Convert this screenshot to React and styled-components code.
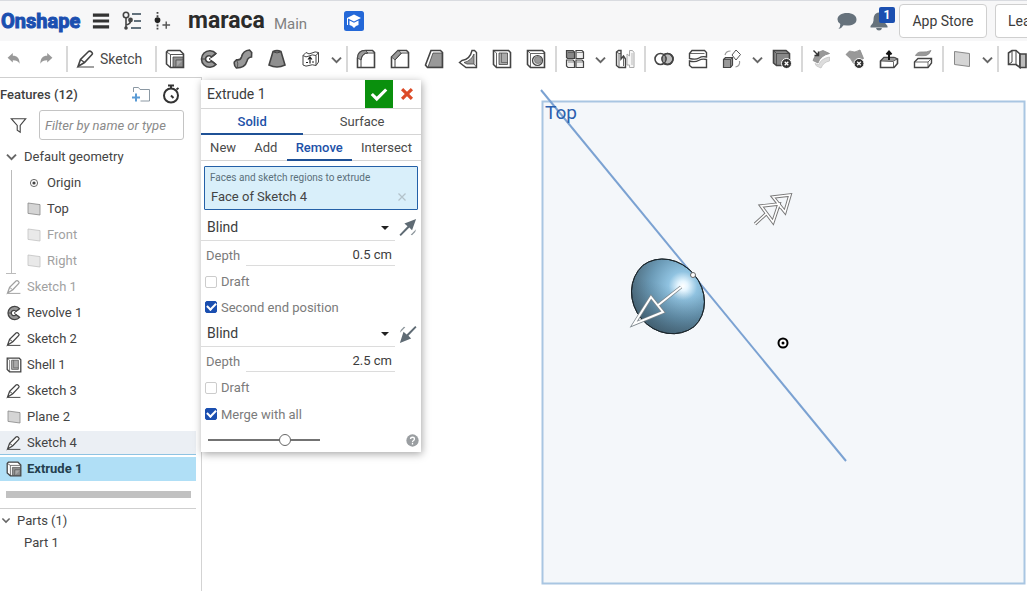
import { useState } from 'react';
import styled, { createGlobalStyle } from 'styled-components';

const GlobalStyle = createGlobalStyle`
    * {
        box-sizing: border-box;
    }
    body {
        margin: 0;
        background: #fff;
        color: #444;
        font-family: Roboto, "Liberation Sans", sans-serif;
        font-size: 13px;
        overflow: hidden;
    }
    button, input, select {
        font: inherit;
        color: inherit;
    }
    ul {
        display: flex;
        flex-direction: column;
        list-style: none;
        margin: 0;
        padding: 0;
    }
`;

const Page = styled.div`
    display: flex;
    flex-direction: column;
    min-height: 100vh;
`;

/* ---------- header ---------- */

const Header = styled.header`
    display: flex;
    align-items: center;
    height: 41px;
    background: #f7f7f8;
    border-top: 1px solid #d9dbe0;
    overflow: hidden;
`;

const Logo = styled.a`
    width: 84px;
    padding-left: 1px;
    color: #1b4fb0;
    font-size: 20px;
    font-weight: 700;
    line-height: 36px;
    text-decoration: none;
    -webkit-text-stroke: 1px #1b4fb0;
`;

const IconButton = styled.button`
    display: flex;
    flex: none;
    align-items: center;
    justify-content: center;
    width: ${(props) => props.$width || 34}px;
    height: 34px;
    padding: 0;
    border: 0;
    background: none;
`;

const DocName = styled.h1`
    margin: 0 0 0 10px;
    color: #2b2b2b;
    font-size: 23px;
    font-weight: 700;
    line-height: 44px;
`;

const Workspace = styled.span`
    margin: 6px 30px 0 9px;
    color: #808080;
    font-size: 15px;
`;

const HeaderRight = styled.div`
    display: flex;
    align-items: center;
    margin-left: auto;
`;

const Bell = styled.div`
    position: relative;
    margin-right: 3px;
`;

const Badge = styled.span`
    position: absolute;
    top: 3px;
    right: 1px;
    width: 16px;
    height: 16px;
    border-radius: 2px;
    background: #1b4fb0;
    color: #fff;
    font-size: 12px;
    font-weight: 700;
    line-height: 16px;
    text-align: center;
`;

const StoreButton = styled.button`
    width: 88px;
    height: 34px;
    margin-right: 8px;
    padding: 0;
    border: 1px solid #cfcfcf;
    border-radius: 4px;
    background: #fff;
    color: #3c3c3c;
    font-size: 14px;
`;

const LearnButton = styled(StoreButton)`
    width: 32px;
    margin-right: 0;
    padding-left: 12px;
    border-right: 0;
    border-radius: 4px 0 0 4px;
    overflow: hidden;
    text-align: left;
    white-space: nowrap;
`;

/* ---------- toolbar ---------- */

const Toolbar = styled.div`
    display: flex;
    align-items: center;
    height: 36px;
    overflow: hidden;
`;

const Divider = styled.span`
    flex: none;
    width: 2px;
    height: 26px;
    margin: 0 1px 0 2px;
    background: #d8d8d8;
`;

const SketchButton = styled.button`
    display: flex;
    flex: none;
    align-items: center;
    gap: 4px;
    width: 84px;
    padding: 0 0 0 7px;
    border: 0;
    background: none;
    color: #4a4a4a;
    font-size: 14px;
`;

/* ---------- feature list ---------- */

const Main = styled.main`
    display: grid;
    flex: 1;
    grid-template-columns: 202px 1fr;
`;

const Sidebar = styled.aside`
    border-top: 1px solid #cfcfcf;
    border-right: 1px solid #d3d3d3;
`;

const SideTitle = styled.div`
    display: flex;
    align-items: center;
    height: 32px;
    padding-right: 14px;
    h2 {
        flex: 1;
        margin: 0;
        color: #3f3f3f;
        font-size: 13px;
        font-weight: 500;
    }
`;

const FilterRow = styled.label`
    display: flex;
    align-items: center;
    gap: 12px;
    padding: 0 17px 4px 10px;
`;

const FilterInput = styled.input`
    flex: 1;
    min-width: 0;
    height: 30px;
    padding: 0 5px;
    border: 1px solid #c4c4c4;
    border-radius: 3px;
    font-style: italic;
    &::placeholder {
        color: #8a8a8a;
    }
`;

const FeatureRow = styled.li`
    display: flex;
    align-items: center;
    gap: 5px;
    height: 24px;
    margin: 1px 5px 1px 0;
    padding-left: ${(props) => props.$indent || 6}px;
    opacity: ${(props) => (props.$hidden ? 0.5 : 1)};
    background: ${(props) => (props.$selected ? '#b0dff6' : props.$hovered ? '#ebeff4' : 'none')};
    border-bottom: 1px solid ${(props) => (props.$hovered ? '#8ec3e2' : 'transparent')};
    font-weight: ${(props) => (props.$selected ? 700 : 400)};
    color: ${(props) => (props.$selected ? '#24404f' : '#444')};
`;

const Nested = styled.ul`
    position: relative;
    margin-left: 11px;
    border-left: 1px solid #bbb;
    &::after {
        content: '';
        position: absolute;
        left: -6px;
        bottom: 0;
        width: 10px;
        height: 1px;
        background: #bbb;
    }
`;

const RollbackBar = styled.div`
    height: 7px;
    margin: 9px 10px 10px 6px;
    background: #c1c1c1;
`;

const Parts = styled.section`
    margin-right: 5px;
    border-top: 1px solid #cfcfcf;
`;

const PartsTitle = styled.h2`
    display: flex;
    align-items: center;
    gap: 5px;
    height: 22px;
    margin: 0;
    font-size: 13px;
    font-weight: 400;
`;

const PartRow = styled.li`
    padding-left: 24px;
    line-height: 24px;
`;

/* ---------- viewport and dialog ---------- */

const Viewport = styled.section`
    position: relative;
`;

const Scene = styled.svg`
    position: absolute;
    inset: 0;
    width: 100%;
    height: 100%;
`;

const Dialog = styled.form`
    position: absolute;
    top: 3px;
    left: -1px;
    width: 220px;
    background: #fff;
    box-shadow: 1px 2px 8px rgba(0, 0, 0, 0.35);
`;

const DialogTitle = styled.div`
    display: flex;
    align-items: center;
    height: 29px;
    padding-left: 6px;
    border-bottom: 1px solid #d5d5d5;
    h2 {
        flex: 1;
        margin: 0;
        color: #3c3c3c;
        font-size: 14px;
        font-weight: 400;
    }
`;

const DialogButton = styled.button`
    display: grid;
    place-items: center;
    width: 28px;
    height: 28px;
    padding: 0;
    border: 0;
    background: ${(props) => (props.$ok ? '#0a900d' : 'none')};
`;

const Tabs = styled.div`
    display: flex;
    height: 26px;
    border-bottom: 1px solid #d5d5d5;
`;

const Tab = styled.button`
    flex: 1 1 auto;
    height: 26px;
    padding: 1px 8px 0;
    border: 0;
    border-bottom: 2px solid ${(props) => (props.$active ? '#1f5196' : 'transparent')};
    background: none;
    color: ${(props) => (props.$active ? '#1d51a8' : '#4a4a4a')};
    font-weight: ${(props) => (props.$active ? 500 : 400)};
`;

const Selection = styled.div`
    margin: 5px 3px 4px;
    height: 44px;
    padding: 4px 8px 0 5px;
    border: 1px solid #2460a7;
    border-radius: 1px;
    background: #d9effa;
`;

const SelectionLabel = styled.div`
    color: #5b6f7b;
    font-size: 10px;
    line-height: 14px;
`;

const SelectionItem = styled.div`
    display: flex;
    align-items: center;
    justify-content: space-between;
    padding-left: 1px;
    line-height: 24px;
    button {
        display: flex;
        padding: 0 2px;
        border: 0;
        background: none;
    }
`;

const TypeRow = styled.div`
    display: flex;
    align-items: center;
    height: 27px;
`;

const SelectBox = styled.div`
    position: relative;
    flex: 1;
    border-bottom: 1px solid #dcdcdc;
    svg {
        position: absolute;
        top: 12px;
        right: 6px;
        pointer-events: none;
    }
`;

const TypeSelect = styled.select`
    display: block;
    width: 100%;
    height: 26px;
    padding: 0 6px;
    border: 0;
    appearance: none;
    background: none;
    color: #3c3c3c;
    font-size: 14px;
`;

const DepthRow = styled.label`
    display: flex;
    align-items: center;
    height: 28px;
    padding: 0 26px 0 5px;
    color: #7b7b7b;
`;

const DepthInput = styled.input`
    flex: 1;
    min-width: 0;
    height: 22px;
    margin-left: 6px;
    padding: 0 3px 0 0;
    border: 0;
    border-bottom: 1px solid #dcdcdc;
    background: none;
    color: #3c3c3c;
    text-align: right;
`;

const CheckRow = styled.label`
    display: flex;
    align-items: center;
    gap: 4px;
    height: ${(props) => props.$height || 26}px;
    padding-left: 4px;
    color: #7b7b7b;
`;

const CheckBox = styled.input`
    display: grid;
    place-items: center;
    width: 12px;
    height: 12px;
    margin: 0;
    border: 1px solid #ccc;
    border-radius: 2px;
    appearance: none;
    &:checked {
        border-color: #1b4fb0;
        background: #1b4fb0;
    }
    &:checked::after {
        content: '';
        width: 7px;
        height: 4px;
        border: solid #fff;
        border-width: 0 0 2px 2px;
        transform: rotate(-45deg) translate(1px, -1px);
    }
`;

const DialogFooter = styled.div`
    display: flex;
    align-items: center;
    justify-content: space-between;
    height: 24px;
    padding: 0 2px 0 7px;
`;

const Slider = styled.input`
    width: 112px;
    height: 14px;
    margin: 0;
    appearance: none;
    background: linear-gradient(#737373, #737373) center / 100% 2px no-repeat;
    &::-webkit-slider-thumb {
        width: 12px;
        height: 12px;
        border: 1px solid #666;
        border-radius: 50%;
        appearance: none;
        background: #fff;
    }
`;

/* ---------- icons ---------- */

const shapes = {
    undo: (
        <path d="M2 8.5 8.5 2.5V6C14 6 17 9 17 16 15 12.500 13 11.500 8.500 11.500V14.500Z" fill="#999" stroke="none" />
    ),
    redo: (
        <path d="M18 8.500 11.500 2.500V6C6 6 3 9 3 16 5 12.500 7 11.500 11.500 11.500V14.500Z" fill="#999" stroke="none" />
    ),
    pencil: (
        <>
            <path d="M2 17.5 4.5 10.5 12.5 2.5Q14 1.5 15.5 3T16 5.5L8.5 13.5Z" fill="#fff" />
            <path d="M4.5 10.5 8.5 13.5M2 18H18" fill="none" strokeWidth="1.2" />
        </>
    ),
    extrude: (
        <>
            <path d="M1.5 3 3 1.5H15L18.5 5V18.5H5.5L1.5 15Z" fill="#fff" />
            <path d="M1.5 3 5.5 5.5V18.5M5.5 5.5H18" fill="none" strokeWidth=".9" />
            <path d="M8 8H18V18H8Z" fill="#8f8f8f" strokeWidth=".8" />
            <path d="M11 18V11H18" fill="#aaa" strokeWidth=".7" />
        </>
    ),
    revolve: (
        <>
            <path d="M17 4.5A8.3 8.3 0 1 0 17 15.5L12.5 12A3.3 3.3 0 1 1 12.5 8Z" fill="#999" />
            <path d="M2.5 10H7M10 10 17 5M10 10 17 15" fill="none" strokeWidth="1" />
        </>
    ),
    sweep: (
        <>
            <path
                d="M1.300 13 3.500 10.800Q7.500 11.500 8.500 8 10 1.500 16.500 1L18.700 3.500 18.500 8Q14.800 8.500 14 12 12 19 3.500 19Q.800 17 1.300 13Z"
                fill="#999"
            />
            <path d="M3.500 10.800Q5.500 13.500 4.500 18.500" fill="none" strokeWidth=".8" />
        </>
    ),
    loft: (
        <>
            <path d="M6 2.5Q10 .8 14 2.5L18 16Q10 20 2 16Z" fill="#8f8f8f" />
            <path d="M6.500 3Q10 4.800 13.500 3" fill="none" strokeWidth="1" />
        </>
    ),
    thicken: (
        <>
            <path d="M2 6.5 5 3.5Q8 6 11 4T17.5 3.5V13L15 16.5Q11 15 8 16.5T2 16Z" fill="#fff" strokeWidth="1" />
            <path d="M2 6.5Q5 9 8 7T15 6.5V16.5M15 6.5 17.5 3.5" fill="none" strokeWidth="1" />
            <path d="M9 14.500V8.500M7 10.500 9 8 11 10.500M5 13.500H7M11 13H13" fill="none" stroke="#222" strokeWidth="1.2" />
        </>
    ),
    chevron: <path d="M4 7.500 10 13.500 16 7.500" fill="none" stroke="#666" strokeWidth="2.600" />,
    fillet: (
        <>
            <path d="M1.500 18.500V9Q2 1.500 9.500 1.500H16.500L18.500 3.500V18.500Z" fill="#fff" />
            <path d="M1.500 9Q2 1.500 9.500 1.500L12 4Q6 4 5 11Z" fill="#999" strokeWidth=".8" />
            <path d="M5 18V11Q6 4 12 4H18" fill="none" strokeWidth="1" />
        </>
    ),
    chamfer: (
        <>
            <path d="M1.500 18.500V8L8 1.500H16.500L18.500 3.500V18.500Z" fill="#fff" />
            <path d="M1.500 8 8 1.500 11.500 4 5 11Z" fill="#999" strokeWidth=".8" />
            <path d="M5 18V11L11.500 4H18" fill="none" strokeWidth="1" />
        </>
    ),
    draft: (
        <>
            <path d="M1.500 16 7 1.500H16.500L18.500 3.500V18.500H3.500Z" fill="#fff" />
            <path d="M9 4H18V18H4Z" fill="#999" strokeWidth=".8" />
        </>
    ),
    rib: (
        <>
            <path d="M1.500 13.500 4 11.500Q12 10.500 14 1.500H16.500L18.500 3.500V18.500H8Z" fill="#fff" strokeWidth="1.400" />
            <path d="M6 13.500Q13 12 16 5V15H9Z" fill="#999" strokeWidth=".8" />
            <path d="M16 15 18.500 18" fill="none" strokeWidth=".8" />
        </>
    ),
    shell: (
        <>
            <path d="M1.500 1.500H16.500L18.500 3.500V18.500H4.500L1.500 15.500Z" fill="#fff" />
            <path d="M1.500 1.500 4.500 4V18.500" fill="none" strokeWidth=".8" />
            <path d="M7 4H15.500V15.500H7Z" fill="#aaa" strokeWidth=".8" />
            <path d="M9.500 4V13.500H15.500" fill="none" strokeWidth=".6" />
        </>
    ),
    hole: (
        <>
            <path d="M1.500 1.500H16.500L18.500 3.500V18.500H4.500L1.500 15.500Z" fill="#fff" />
            <path d="M1.500 1.500 4.500 4.500V18.500M4.500 4.500H18" fill="none" strokeWidth=".8" />
            <circle cx="11.500" cy="11.500" r="5" fill="#ddd" strokeWidth="1.200" />
            <circle cx="12" cy="11" r="3.500" fill="#999" stroke="#777" strokeWidth=".8" />
        </>
    ),
    pattern: (
        <>
            <path d="M1.500 1.500H8L9.500 3V9.500H2.500L1.500 8.500Z" fill="#888" strokeWidth="1.200" />
            <path
                d="M11 1.500H17L18.500 3V9.500H11ZM1.500 11H8L9.500 12.500V18.500H3L1.500 17ZM11 11H17L18.500 12.500V18.500H11Z"
                fill="#eee"
                strokeWidth="1.200"
            />
            <path d="M3 3.500H9M12 3.500H18M3 13H9M12 13H18" fill="none" strokeWidth=".6" />
        </>
    ),
    mirror: (
        <>
            <path d="M1.500 3 3.500 1.500H6V10L8.500 7 10.500 10V18.500H4L1.500 16.500Z" fill="#fff" strokeWidth="1.400" />
            <path d="M1.500 3 4 4.500V18M4 4.500H6M8.500 7V17" fill="none" strokeWidth=".8" />
            <path d="M19 3.500 17.500 1.500H14.500V7L12 5V16H14.500V18.500H19Z" fill="#f6f6f6" stroke="#aaa" strokeWidth="1" />
            <path d="M17 4V16" fill="none" stroke="#bbb" strokeWidth="1" />
        </>
    ),
    boolean: (
        <>
            <circle cx="13.500" cy="10" r="5.500" fill="#bbb" />
            <circle cx="6.500" cy="10" r="5.500" fill="#fff" />
            <circle cx="13.500" cy="10" r="5.500" fill="none" />
            <path d="M10 5.800A5.500 5.500 0 0 1 10 14.200 5.500 5.500 0 0 1 10 5.800" fill="#999" strokeWidth="1" />
        </>
    ),
    split: (
        <>
            <path d="M1.500 4.500 4 1.500H16.500L18.500 3.500V8Q14 7 11 9T1.500 9.500Z" fill="#fff" strokeWidth="1.400" />
            <path d="M1.500 12Q7 13.500 10.500 11.500T18.500 10.500V18.500H4L1.500 16.500Z" fill="#fff" strokeWidth="1.400" />
            <path d="M1.500 4.500H16.500" fill="none" strokeWidth=".8" />
        </>
    ),
    transform: (
        <>
            <path d="M1.500 10.500 3.500 8.500H10.500V16L8.500 18.500H1.500Z" fill="#999" strokeWidth="1.200" />
            <path d="M1.500 10.500H8.500V18.500M8.500 10.500 10.500 8.500" fill="none" strokeWidth=".8" />
            <path d="M14 1 18.500 5.500 14 11 10 6Z" fill="#fff" strokeWidth=".9" />
            <path d="M3 6Q4 2 8.500 2M17.500 12Q18.500 17 13.500 18" fill="none" stroke="#999" strokeWidth="1.200" />
        </>
    ),
    deletePart: (
        <>
            <path d="M1.500 1.500H14L17.500 4.500V16.500H4.500L1.500 14Z" fill="#888" />
            <path d="M1.500 1.500 4.500 4.500V16.500M4.500 4.500H17" fill="none" strokeWidth=".8" />
            <circle cx="14.500" cy="14.500" r="5" fill="#333" stroke="#fff" strokeWidth="1" />
            <path d="M12.700 12.700 16.300 16.300M16.300 12.700 12.700 16.300" fill="none" stroke="#fff" strokeWidth="1.300" />
        </>
    ),
    modifyFillet: (
        <>
            <path d="M2 11.500Q5 3 12 1.500L18.500 4.500Q9.500 6.500 7 14Z" fill="#999" stroke="#888" strokeWidth=".8" />
            <path d="M4 14.500 7.500 16Q10 9.500 18.500 8V12Q12.500 13 10 19L5.500 17Z" fill="#ddd" stroke="#c4c4c4" strokeWidth=".8" />
            <path d="M2.500 1.500 7 6M7.500 2.500V6.500H3.500" fill="none" stroke="#333" strokeWidth="1.400" />
        </>
    ),
    deleteFace: (
        <>
            <path d="M1 5.500 4.500 2Q10 4.500 15 1L18.500 9.500Q13 10.500 8.500 14.500Q6 9 1 5.500Z" fill="#999" stroke="#888" strokeWidth=".8" />
            <circle cx="14" cy="14.500" r="5" fill="#333" stroke="#fff" strokeWidth="1" />
            <path d="M12.200 12.700 15.800 16.300M15.800 12.700 12.200 16.300" fill="none" stroke="#fff" strokeWidth="1.300" />
        </>
    ),
    moveFace: (
        <>
            <path d="M1.500 12 5 8.500H15L18.500 10V14.500L15 18.500H1.500Z" fill="#fff" />
            <path d="M2 12 5 8.500H15.500L18 10 14 12.500Z" fill="#999" strokeWidth=".8" />
            <path d="M14.500 13V18" fill="none" strokeWidth=".8" />
            <path d="M10 11V3M7.500 5.500 10 2.500 12.500 5.500" fill="none" stroke="#111" strokeWidth="2" />
        </>
    ),
    replaceFace: (
        <>
            <path d="M2.500 6.500Q4.500 2.500 9 3T18 1.500Q16 6 13 6.500T2.500 6.500Z" fill="#999" stroke="#888" strokeWidth=".8" />
            <path d="M1.500 13 5 9.500H18.500V14L15 18.500H1.500Z" fill="#fff" strokeWidth="1.400" />
            <path d="M1.500 13H15V18.500M15 13 18.500 9.500" fill="none" strokeWidth=".8" />
        </>
    ),
    plane: <path d="M2.500 2.500 17.500 4.500V17.500L2.500 15.500Z" fill="#d5d5d5" stroke="#888" strokeWidth="1" />,
    frame: (
        <>
            <path d="M1.500 4 5 1.500H9L13 5V18.500L9 15.500H1.500Z" fill="#fff" />
            <path d="M5 1.500V13M9 1.500V15.500L13 18.500M5 13 1.500 15.500" fill="none" strokeWidth="1" />
            <path d="M13 5H19V18.500H13Z" fill="#bbb" />
        </>
    ),
    origin: (
        <>
            <circle cx="10" cy="10" r="4.500" fill="none" strokeWidth="1" />
            <circle cx="10" cy="10" r="2" fill="#444" stroke="none" />
        </>
    ),
    menu: <path d="M1 3.500H19M1 10H19M1 16.500H19" fill="none" stroke="#333" strokeWidth="3.400" />,
    versions: (
        <>
            <circle cx="4" cy="4" r="2.700" fill="none" />
            <circle cx="8.500" cy="9" r="1.600" fill="#444" />
            <path d="M4 7V17M8.500 10Q8.500 13 4 14" fill="none" />
            <circle cx="4" cy="17" r="1.800" fill="#444" stroke="none" />
            <path d="M10 3H19M12 10H19M9 17H19" fill="none" stroke="#62717c" strokeWidth="2" />
        </>
    ),
    insertVersion: (
        <>
            <path d="M5 0V20" fill="none" strokeDasharray="2 1.500" strokeWidth="2" />
            <circle cx="5" cy="9" r="3.200" fill="#222" stroke="none" />
            <path d="M10.500 14.500H19M14.700 10.500V18.500" fill="none" stroke="#555" />
        </>
    ),
    learn: (
        <>
            <rect width="20" height="20" rx="2.500" fill="#2468d8" stroke="none" />
            <path d="M10 3.500 17 7 10 10.500 3 7Z" fill="#fff" stroke="none" />
            <path d="M5.500 9.500 10 11.700 14.500 9.500V14L12 15 10 17 8 15 5.500 14Z" fill="#fff" stroke="none" />
            <path d="M3.500 7V14" fill="none" stroke="#fff" strokeWidth="1" />
        </>
    ),
    chat: <path d="M10 2C15.500 2 19.500 4.500 19.500 8.500S15.500 14.500 10 14.500L6.500 14.200Q4.500 17.500 1.500 18 3.500 15.500 3.300 13 .500 11.300 .500 8.500C.500 4.500 4.500 2 10 2Z" fill="#66727c" stroke="none" />,
    bell: (
        <>
            <path d="M10 1.500C15 2 15.500 6 15.500 9.500Q15.500 12.500 18.500 15V16.500H1.500V15Q4.500 12.500 4.500 9.500C4.500 6 5 2 10 1.500Z" fill="#66727c" stroke="none" />
            <path d="M7 17H13Q12.500 19.500 10 19.500T7 17Z" fill="#66727c" stroke="none" />
        </>
    ),
    folderAdd: (
        <>
            <path d="M2.500 8V3.500H7.500L9 5.500H18.500V17H9.500" fill="none" stroke="#8b98a3" strokeWidth="1" />
            <path d="M5 9.500V17.500M1 13.500H9" fill="none" stroke="#5b9bd5" strokeWidth="2" />
        </>
    ),
    stopwatch: (
        <>
            <circle cx="10" cy="11.500" r="7" fill="none" stroke="#333" strokeWidth="2" />
            <path d="M7 1.500H13M10 1.500V5M15.500 5.500 17.500 4M10 11.500 12.500 14" fill="none" stroke="#333" strokeWidth="2" />
        </>
    ),
    funnel: <path d="M1.500 2H18.500L12 10V18L8.500 15.500V10Z" fill="none" strokeWidth="1.300" />,
    check: <path d="M2 10 7.500 15.500 18 5" fill="none" stroke="#fff" strokeWidth="3.500" />,
    cross: <path d="M3 3 17 17M17 3 3 17" fill="none" stroke="#dc4b28" strokeWidth="4.500" />,
    remove: <path d="M3 3 17 17M17 3 3 17" fill="none" stroke="#b3c2ca" strokeWidth="2.500" />,
    flip: (
        <>
            <path d="M19 0 14.500 12.500 11.500 9.500 2 19 .500 17.500 9.500 8 6 5Z" fill="#5f6b74" stroke="none" />
            <path d="M13 17.500 19 11.500 18 14.500 14.500 18Z" fill="#8c959b" stroke="none" />
        </>
    ),
    flipBack: (
        <>
            <path d="M1 20 5 7.500 8.500 10.500 18 1 19.500 2.500 10.500 12 13.500 15Z" fill="#5f6b74" stroke="none" />
            <path d="M1 8.500 7 2.500 5.500 2 2 5.500Z" fill="#8c959b" stroke="none" />
        </>
    ),
    help: (
        <>
            <circle cx="10" cy="10" r="9.500" fill="#9a9ea1" stroke="none" />
            <path d="M7 7.800Q7 5 10 5T13 7.800Q13 9.200 11.500 10T10 12.500M10 14V16" fill="none" stroke="#fff" strokeWidth="2" />
        </>
    ),
};

function Icon({ name, size = 20 }) {
    return (
        <svg width={size} height={size} viewBox="0 0 20 20" stroke="#444" strokeWidth="1.6" aria-hidden="true">
            {shapes[name]}
        </svg>
    );
}

// each group is followed by a divider
const toolGroups = [
    ['extrude', 'revolve', 'sweep', 'loft', 'thicken', 'chevron'],
    ['fillet', 'chamfer', 'draft', 'rib', 'shell', 'hole'],
    ['pattern', 'chevron', 'mirror'],
    ['boolean', 'split', 'transform', 'chevron', 'deletePart'],
    ['modifyFillet', 'deleteFace', 'moveFace', 'replaceFace'],
    ['plane', 'chevron'],
];

const geometry = [
    { name: 'Origin', icon: 'origin' },
    { name: 'Top', icon: 'plane' },
    { name: 'Front', icon: 'plane', hidden: true },
    { name: 'Right', icon: 'plane', hidden: true },
];

const features = [
    { name: 'Sketch 1', icon: 'pencil', hidden: true },
    { name: 'Revolve 1', icon: 'revolve' },
    { name: 'Sketch 2', icon: 'pencil' },
    { name: 'Shell 1', icon: 'shell' },
    { name: 'Sketch 3', icon: 'pencil' },
    { name: 'Plane 2', icon: 'plane' },
    { name: 'Sketch 4', icon: 'pencil', hovered: true },
    { name: 'Extrude 1', icon: 'extrude', selected: true },
];

function TopBar() {
    return (
        <Header>
            <Logo href="#">Onshape</Logo>
            <IconButton aria-label="Menu"><Icon name="menu" size={18} /></IconButton>
            <IconButton $width={28} aria-label="Versions"><Icon name="versions" /></IconButton>
            <IconButton $width={32} aria-label="Create version"><Icon name="insertVersion" size={18} /></IconButton>
            <DocName>maraca</DocName>
            <Workspace>Main</Workspace>
            <IconButton aria-label="Education"><Icon name="learn" /></IconButton>
            <HeaderRight>
                <IconButton $width={30} aria-label="Comments"><Icon name="chat" /></IconButton>
                <Bell>
                    <IconButton aria-label="Notifications"><Icon name="bell" /></IconButton>
                    <Badge>1</Badge>
                </Bell>
                <StoreButton>App Store</StoreButton>
                <LearnButton>Learn</LearnButton>
            </HeaderRight>
        </Header>
    );
}

function Tools() {
    return (
        <Toolbar>
            <IconButton $width={28} aria-label="Undo"><Icon name="undo" size={16} /></IconButton>
            <IconButton $width={36} aria-label="Redo"><Icon name="redo" size={16} /></IconButton>
            <Divider />
            <SketchButton><Icon name="pencil" /> Sketch</SketchButton>
            {toolGroups.map((group, i) => [
                <Divider key={'divider' + i} />,
                ...group.map((name) => (
                    <IconButton key={name} aria-label={name} $width={name === 'chevron' ? 16 : 34}>
                        <Icon name={name} size={name === 'chevron' ? 15 : 20} />
                    </IconButton>
                )),
            ])}
            <Divider />
            <IconButton aria-label="frame"><Icon name="frame" /></IconButton>
        </Toolbar>
    );
}

function FeatureList() {
    return (
        <Sidebar>
            <SideTitle>
                <h2>Features (12)</h2>
                <IconButton $width={28} aria-label="Add folder"><Icon name="folderAdd" /></IconButton>
                <IconButton $width={32} aria-label="Rebuild times"><Icon name="stopwatch" /></IconButton>
            </SideTitle>
            <FilterRow>
                <Icon name="funnel" size={17} />
                <FilterInput placeholder="Filter by name or type" aria-label="Filter" />
            </FilterRow>
            <ul>
                <FeatureRow $indent={4}><Icon name="chevron" size={15} />Default geometry</FeatureRow>
            </ul>
            <Nested>
                {geometry.map((item) => (
                    <FeatureRow key={item.name} $indent={14} $hidden={item.hidden}>
                        <Icon name={item.icon} size={16} />
                        {item.name}
                    </FeatureRow>
                ))}
            </Nested>
            <ul>
                {features.map((item) => (
                    <FeatureRow key={item.name} $hidden={item.hidden} $hovered={item.hovered} $selected={item.selected}>
                        <Icon name={item.icon} size={16} />
                        {item.name}
                    </FeatureRow>
                ))}
            </ul>
            <RollbackBar />
            <Parts>
                <PartsTitle><Icon name="chevron" size={12} />Parts (1)</PartsTitle>
                <ul>
                    <PartRow>Part 1</PartRow>
                </ul>
            </Parts>
        </Sidebar>
    );
}

function EndCondition({ id, depth, flip }) {
    return (
        <>
            <TypeRow>
                <SelectBox>
                    <TypeSelect aria-label={id + ' end type'} defaultValue="Blind">
                        <option>Blind</option>
                    </TypeSelect>
                    <svg width="8" height="5"><path d="M0 0H8L4 4Z" fill="#222" /></svg>
                </SelectBox>
                <IconButton type="button" $width={26} aria-label="Flip direction"><Icon name={flip} size={18} /></IconButton>
            </TypeRow>
            <DepthRow>
                Depth
                <DepthInput defaultValue={depth} />
            </DepthRow>
            <CheckRow $height={25}>
                <CheckBox type="checkbox" />
                Draft
            </CheckRow>
        </>
    );
}

function ExtrudeDialog() {
    const [body, setBody] = useState('Solid');
    const [mode, setMode] = useState('Remove');

    return (
        <Dialog>
            <DialogTitle>
                <h2>Extrude 1</h2>
                <DialogButton type="button" $ok aria-label="Accept"><Icon name="check" size={18} /></DialogButton>
                <DialogButton type="button" aria-label="Cancel"><Icon name="cross" size={14} /></DialogButton>
            </DialogTitle>
            <Tabs>
                {['Solid', 'Surface'].map((name) => (
                    <Tab key={name} type="button" $active={body === name} onClick={() => setBody(name)}>{name}</Tab>
                ))}
            </Tabs>
            <Tabs>
                {['New', 'Add', 'Remove', 'Intersect'].map((name) => (
                    <Tab key={name} type="button" $active={mode === name} onClick={() => setMode(name)}>{name}</Tab>
                ))}
            </Tabs>
            <Selection>
                <SelectionLabel>Faces and sketch regions to extrude</SelectionLabel>
                <SelectionItem>
                    Face of Sketch 4
                    <button type="button" aria-label="Remove face"><Icon name="remove" size={10} /></button>
                </SelectionItem>
            </Selection>
            <EndCondition id="First" depth="0.5 cm" flip="flip" />
            <CheckRow>
                <CheckBox type="checkbox" defaultChecked />
                Second end position
            </CheckRow>
            <EndCondition id="Second" depth="2.5 cm" flip="flipBack" />
            <CheckRow $height={28}>
                <CheckBox type="checkbox" defaultChecked />
                Merge with all
            </CheckRow>
            <DialogFooter>
                <Slider type="range" defaultValue="71" aria-label="Preview opacity" />
                <Icon name="help" size={13} />
            </DialogFooter>
        </Dialog>
    );
}

const arrows = 'M755 224 767 213M761 206 779 204 773 222ZM773 197 790 195 785 212ZM779 204 781 208';
const dragArrow = 'M681 287 657 306M651 297 663 312 634 324Z';

function Model() {
    return (
        <Scene viewBox="202 77 825 514" fill="none">
            <defs>
                <radialGradient id="ball" gradientUnits="userSpaceOnUse" cx="683" cy="286" r="60">
                    <stop offset="0" stopColor="#fff" />
                    <stop offset=".08" stopColor="#e6f6ff" />
                    <stop offset=".24" stopColor="#90c3e1" />
                    <stop offset=".55" stopColor="#6b9ab6" />
                    <stop offset="1" stopColor="#435b69" />
                </radialGradient>
                <linearGradient id="shade" x1="0.3" y1="0.3" x2="0.1" y2="1">
                    <stop offset="0" stopColor="#2d4656" stopOpacity="0" />
                    <stop offset="1" stopColor="#2d4656" stopOpacity=".45" />
                </linearGradient>
            </defs>
            <rect x="542.5" y="101.500" width="482" height="482" fill="#f4f7fa" stroke="#a9c6e2" strokeWidth="2" />
            <path d="M541 90 846 461" stroke="#7ba2d2" strokeWidth="2" />
            <text x="545" y="119" fill="#2c5fae" fontSize="19">Top</text>
            {['url(#ball)', 'url(#shade)'].map((fill) => (
                <path
                    key={fill}
                    d="M642.800 265.400A40 35 50 0 1 694.200 326.600A40 37 50 0 1 642.800 265.400Z"
                    fill={fill}
                    stroke="#1b262c"
                />
            ))}
            <circle cx="693" cy="275" r="2.500" fill="#fff" stroke="#666" />
            <path d={dragArrow} stroke="#7c868c" strokeWidth="3.500" />
            <path d={dragArrow} stroke="#fff" strokeWidth="2" />
            <path d={arrows} stroke="#777" strokeWidth="3.500" />
            <path d={arrows} stroke="#fff" strokeWidth="1.600" />
            <circle cx="783" cy="343" r="4.500" fill="#fff" stroke="#000" strokeWidth="2" />
            <circle cx="783" cy="343" r="1.500" fill="#000" />
        </Scene>
    );
}

function App() {
    return (
        <>
            <GlobalStyle />
            <Page>
                <TopBar />
                <Tools />
                <Main>
                    <FeatureList />
                    <Viewport>
                        <Model />
                        <ExtrudeDialog />
                    </Viewport>
                </Main>
            </Page>
        </>
    );
}

export default App;
